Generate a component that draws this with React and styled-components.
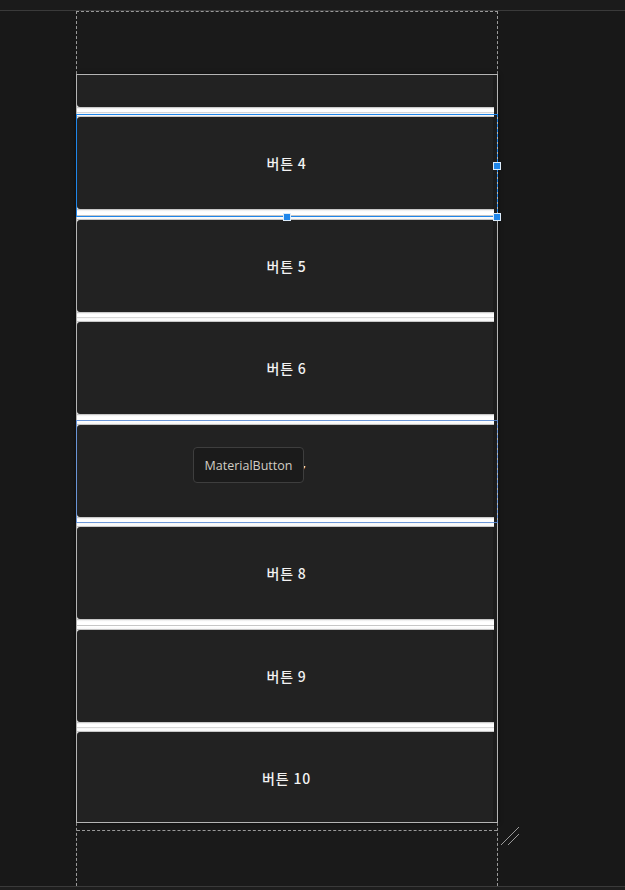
import styled, { createGlobalStyle } from 'styled-components';

const GlobalStyle = createGlobalStyle`
  html, body {
    margin: 0;
    padding: 0;
    background: #181818;
  }
  * {
    box-sizing: border-box;
  }
`;

const buttons = [3, 4, 5, 6, 7, 8, 9, 10];

const App = () => {
  return (
    <Page>
      <GlobalStyle />
      <TopStrip />
      <Canvas>
        <Frame>
          <Header />
          <List>
            <ListInner>
              {buttons.map((n) => (
                <Item key={n}>
                  <Button>버튼 {n}</Button>
                  <Gap />
                </Item>
              ))}
            </ListInner>
          </List>
          <Footer />

          <Selection $top={102} $color="#1f86ea" $solid>
            <Handle style={{ left: 206, top: 98 }} />
            <Handle style={{ left: 416, top: 47 }} />
            <Handle style={{ left: 416, top: 98 }} />
          </Selection>
          <Selection $top={408} $color="#5d8fdc" />

          <Tooltip>MaterialButton</Tooltip>

          <Grip width="22" height="22" viewBox="0 0 22 22">
            <line x1="20" y1="2" x2="2" y2="20" stroke="#9a9a9a" strokeWidth="1" />
            <line x1="20" y1="9" x2="9" y2="20" stroke="#9a9a9a" strokeWidth="1" />
          </Grip>
        </Frame>
      </Canvas>
      <BottomStrip />
    </Page>
  );
};

export default App;

const Page = styled.div`
  width: 625px;
  height: 890px;
  display: flex;
  flex-direction: column;
  background: #181818;
  overflow: hidden;
`;

const TopStrip = styled.div`
  height: 11px;
  flex: none;
  background: #1b1b1b;
  border-bottom: 1px solid #3a3a3a;
`;

const Canvas = styled.div`
  flex: 1;
  display: flex;
  padding-left: 76px;
  min-height: 0;
`;

const Frame = styled.div`
  position: relative;
  width: 422px;
  height: 100%;
  display: flex;
  flex-direction: column;
  background: #1a1a1a;
  border-left: 1px dashed #9a9a9a;
  border-right: 1px dashed #9a9a9a;
  border-top: 1px dashed #9a9a9a;
`;

const Header = styled.div`
  height: 62px;
  flex: none;
`;

const List = styled.div`
  height: 749px;
  flex: none;
  margin: 0 -1px;
  border: 1px solid #b4b4b4;
  background: #222222;
  overflow: hidden;
  box-shadow: 0 0 4px rgba(0, 0, 0, 0.6);
`;

const ListInner = styled.div`
  display: flex;
  flex-direction: column;
  margin-top: -60.5px;
`;

const Item = styled.div`
  height: 102.5px;
  display: flex;
  flex-direction: column;
  background: #f2f2f2;
  box-shadow: inset -3px 0 0 #1e1e1e;
`;

const Button = styled.div`
  height: 92px;
  flex: none;
  display: flex;
  align-items: center;
  justify-content: center;
  margin-right: 1px;
  background: #222222;
  border-radius: 3px;
  color: #f2f2f2;
  font-family: "Noto Sans CJK KR", "Noto Sans", sans-serif;
  font-size: 14px;
  font-weight: 500;
  letter-spacing: 0.8px;
  box-shadow: inset -3px 0 0 #1c1c1c;
`;

const Gap = styled.div`
  flex: 1;
  margin-right: 3px;
  background: linear-gradient(
    #a8a8a8 0%,
    #ececec 10%,
    #ffffff 25%,
    #ffffff 50%,
    #bdbdbd 58%,
    #ffffff 66%,
    #f6f6f6 90%,
    #9a9a9a 100%
  );
`;

const Footer = styled.div`
  flex: 1;
  margin-top: 7px;
  border-top: 1px dashed #9a9a9a;
`;

const Selection = styled.div`
  position: absolute;
  left: -1px;
  top: ${(p) => p.$top}px;
  width: 422px;
  height: 103px;
  border: 1px solid ${(p) => p.$color};
  border-right: 1px dashed ${(p) => p.$color};
  opacity: ${(p) => (p.$solid ? 1 : 0.85)};
  pointer-events: none;
`;

const Handle = styled.div`
  position: absolute;
  width: 8px;
  height: 8px;
  background: #1f86ea;
  border: 1px solid #dcecfb;
`;

const Tooltip = styled.div`
  position: absolute;
  left: 116px;
  top: 435px;
  width: 111px;
  height: 36px;
  display: flex;
  align-items: center;
  justify-content: center;
  background: #1b1b1b;
  border: 1px solid #3e3e3e;
  border-radius: 4px;
  color: #d2cdc4;
  font-family: "Open Sans", "Noto Sans", sans-serif;
  font-size: 12.5px;
`;

const Grip = styled.svg`
  position: absolute;
  left: 422px;
  top: 813px;
`;

const BottomStrip = styled.div`
  height: 4px;
  flex: none;
  background: #1e1e1e;
  border-top: 1px solid #3a3a3a;
`;
